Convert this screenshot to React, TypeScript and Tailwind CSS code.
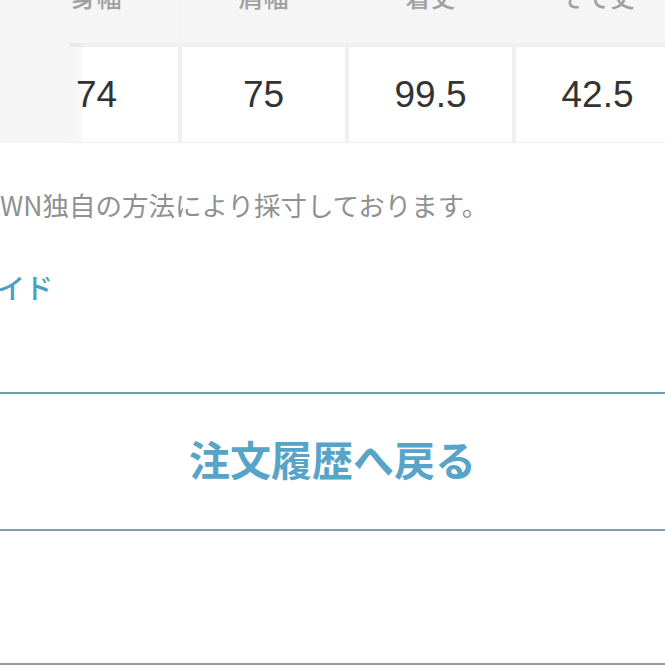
const heads = ["身幅", "肩幅", "着丈", "そで丈"];
const values = ["74", "75", "99.5", "42.5"];

const jp = { fontFamily: '"Noto Sans CJK JP", "Noto Sans", sans-serif' };

export default function App() {
  return (
    <div className="w-[665px] h-[665px] bg-white overflow-hidden flex flex-col" style={jp}>
      {/* size table, scrolled sideways under a sticky first column */}
      <div className="relative h-[143px] shrink-0 overflow-hidden bg-[#f0f0f0]">
        <div className="flex flex-col w-max ml-[15px] gap-[4px]">
          <div className="flex gap-[4px] h-[43px] bg-[#f3f3f3]">
            {heads.map((h) => (
              <div
                key={h}
                className="w-[163px] h-full bg-[#f5f5f5] flex items-end justify-center pb-[34px]"
              >
                <span className="text-[25px] leading-none font-medium text-[#a0a0a0]">{h}</span>
              </div>
            ))}
          </div>
          <div className="flex gap-[4px] h-[95px]">
            {values.map((v) => (
              <div key={v} className="w-[163px] h-full bg-white flex items-center justify-center">
                <span
                  className="text-[37px] leading-none text-[#333333]"
                  style={{ fontFamily: '"Liberation Sans", Arial, sans-serif' }}
                >
                  {v}
                </span>
              </div>
            ))}
          </div>
        </div>
        <div className="absolute left-0 top-0 w-[70px] h-full bg-[#f5f5f5]" />
        <div className="absolute left-[70px] top-[43px] w-[13px] h-[99px] bg-gradient-to-r from-black/[0.04] to-black/[0.02]" />
      </div>

      <p className="mt-[44px] text-[26.5px] leading-[36px] text-[#909090] whitespace-nowrap">
        WN独自の方法により採寸しております。
      </p>

      <p className="mt-[46px] -ml-[3px] text-[28px] leading-[36px] font-medium text-[#4a9fc2] whitespace-nowrap">
        イド
      </p>

      <button
        type="button"
        className="mt-[87px] h-[139px] w-full shrink-0 border-t-2 border-b-2 border-t-[#6a9fb4] border-b-[#7ba4b0] bg-white flex items-center justify-center pb-[7px]"
      >
        <span className="text-[41px] leading-none font-bold text-[#58a4c8]">
          注文履歴へ戻る
        </span>
      </button>

      <div className="flex-1" />
      <div className="h-[2px] shrink-0 bg-[#9a9a9a]" />
    </div>
  );
}
